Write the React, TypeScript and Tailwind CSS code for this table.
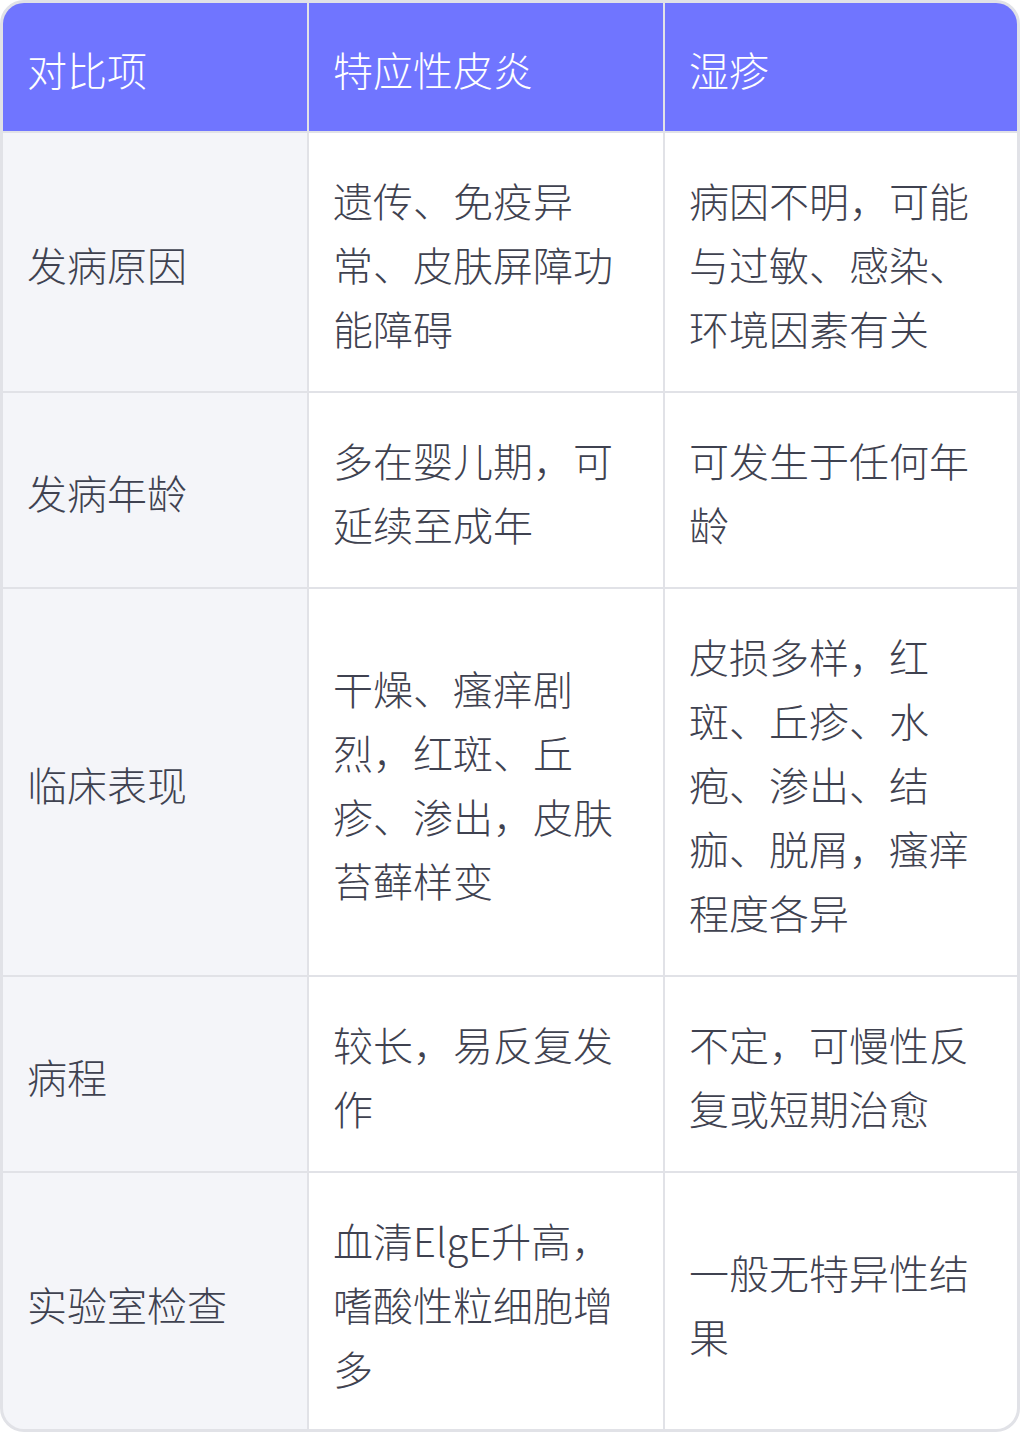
const rows: [string, string, string][] = [
  ["发病原因", "遗传、免疫异常、皮肤屏障功能障碍", "病因不明，可能与过敏、感染、环境因素有关"],
  ["发病年龄", "多在婴儿期，可延续至成年", "可发生于任何年龄"],
  ["临床表现", "干燥、瘙痒剧烈，红斑、丘疹、渗出，皮肤苔藓样变", "皮损多样，红斑、丘疹、水疱、渗出、结痂、脱屑，瘙痒程度各异"],
  ["病程", "较长，易反复发作", "不定，可慢性反复或短期治愈"],
  ["实验室检查", "血清ElgE升高，嗜酸性粒细胞增多", "一般无特异性结果"],
];

export default function App() {
  return (
    <div
      className="w-[1020px] bg-white"
      style={{ fontFamily: '"Noto Sans CJK SC", "Noto Sans", sans-serif' }}
    >
      <div className="grid grid-cols-[304px_354px_352px] gap-[2px] bg-[#e1e2e7] border-[3px] border-[#e1e2e7] rounded-[24px] overflow-hidden text-[40px] leading-[64px] font-light">
        {["对比项", "特应性皮炎", "湿疹"].map((h) => (
          <div key={h} className="bg-[#7075ff] text-white px-6 pt-[34px] pb-[30px]">
            {h}
          </div>
        ))}
        {rows.map((r, i) => {
          const pad = i === rows.length - 1 ? "pt-[35px] pb-[29px]" : "pt-[35px] pb-[31px]";
          return (
            <>
              <div key={r[0] + "a"} className={`bg-[#f4f5f9] text-[#3f4250] px-6 flex items-center ${pad}`}>
                {r[0]}
              </div>
              <div key={r[0] + "b"} className={`bg-white text-[#3f4250] px-6 flex items-center ${pad}`}>
                <span>{r[1]}</span>
              </div>
              <div key={r[0] + "c"} className={`bg-white text-[#3f4250] px-6 flex items-center ${pad}`}>
                <span>{r[2]}</span>
              </div>
            </>
          );
        })}
      </div>
    </div>
  );
}
